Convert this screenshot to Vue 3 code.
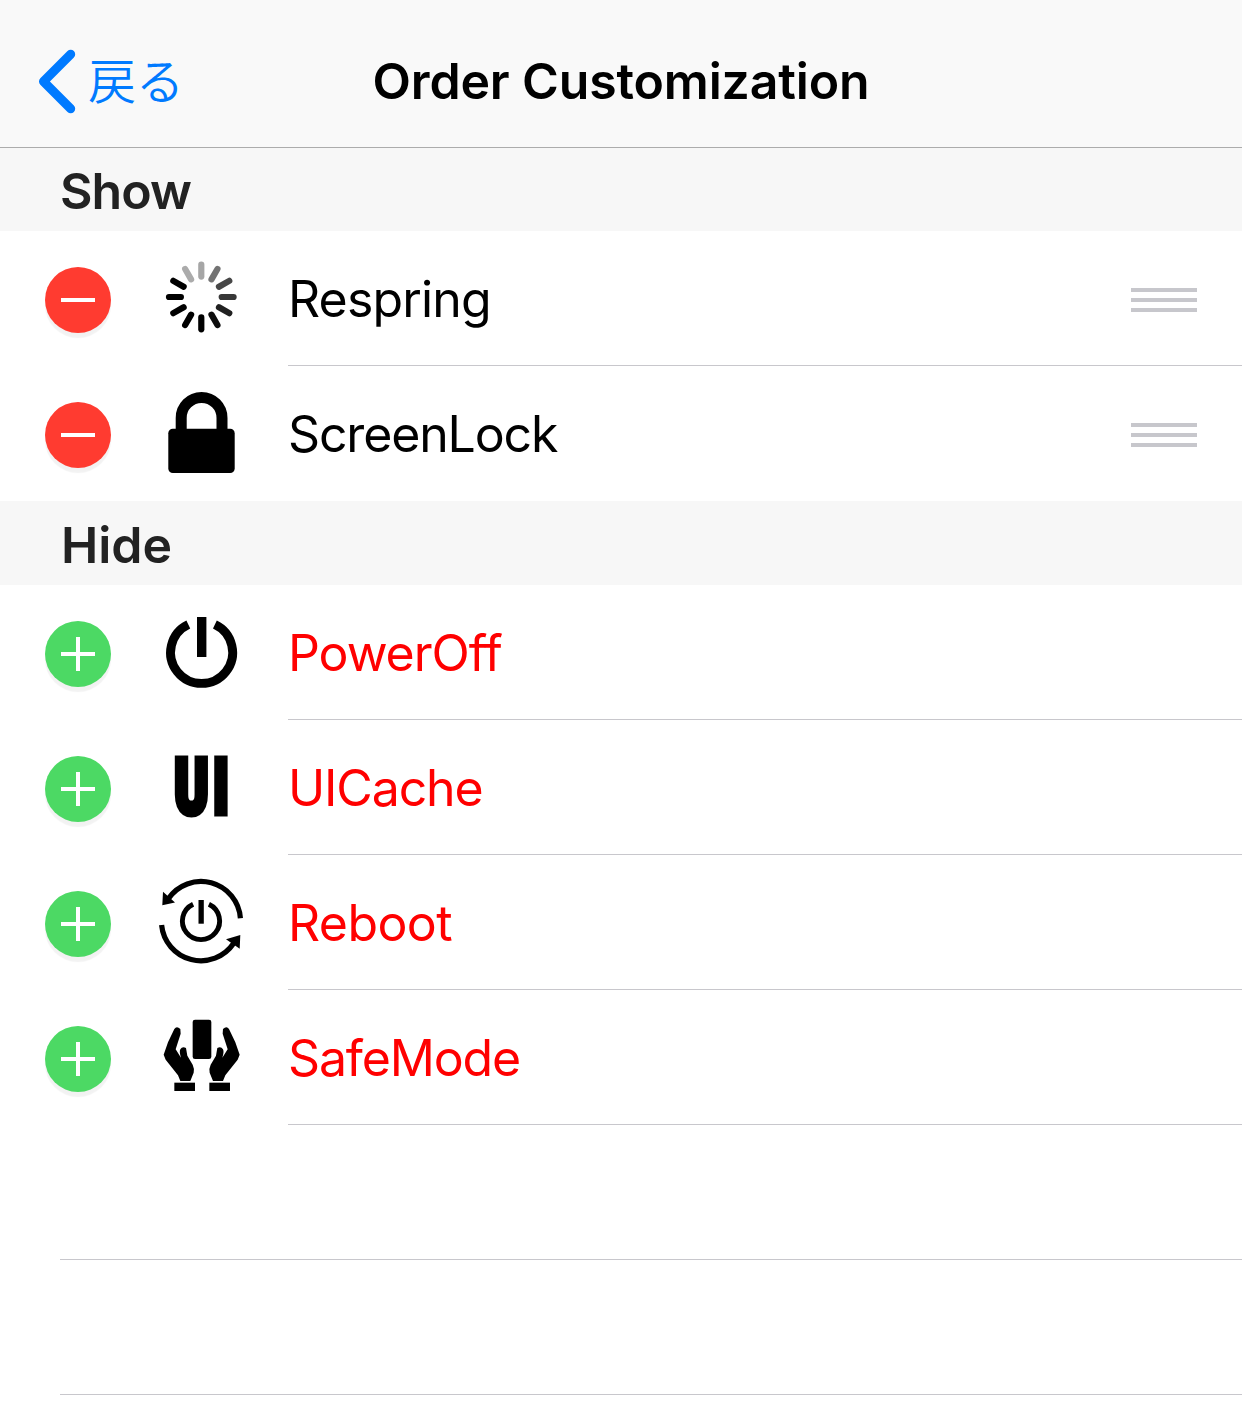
<script setup>
const sections = [
  {
    title: 'Show',
    kind: 'show',
    items: [
      { name: 'Respring', icon: 'spinner' },
      { name: 'ScreenLock', icon: 'lock' },
    ],
  },
  {
    title: 'Hide',
    kind: 'hide',
    items: [
      { name: 'PowerOff', icon: 'power' },
      { name: 'UICache', icon: 'ui' },
      { name: 'Reboot', icon: 'reboot' },
      { name: 'SafeMode', icon: 'hands' },
    ],
  },
]

const spokes = [0.35, 0.55, 0.72, 0.78, 0.87, 0.95, 1, 1, 1, 1, 1, 0.33]

const hand =
  'M73 72Q80 62 91 72L92 86L77 133L93 158Q87 140 91 133Q97 123 108 129L112 152L128 179Q134 192 131 203L121 228H91L84 211L47 164L41 149L54 112z'
</script>

<template>
  <div class="screen">
    <header class="navbar">
      <a class="back">
        <svg class="chevron" width="40" height="66" viewBox="0 0 40 66">
          <path d="M33.7 5.3L6.5 32.5l27.2 27.2" fill="none" stroke="#007aff" stroke-width="9" stroke-linecap="round" stroke-linejoin="round" />
        </svg>
        <span class="back-label">戻る</span>
      </a>
      <h1 class="title">Order Customization</h1>
      <span class="spacer"></span>
    </header>

    <section v-for="section in sections" :key="section.title" :class="['section', section.kind]">
      <h2 class="section-title">{{ section.title }}</h2>
      <div v-for="item in section.items" :key="item.name" class="row">
        <span class="toggle">
          <svg width="66" height="66" viewBox="0 0 66 66">
            <rect x="16" y="31" width="34" height="4" fill="#fff" />
            <rect v-if="section.kind === 'hide'" x="31" y="16" width="4" height="34" fill="#fff" />
          </svg>
        </span>

        <svg class="icon" width="90" height="90" viewBox="0 0 90 90">
          <g v-if="item.icon === 'spinner'" stroke="#000" stroke-width="6.2" stroke-linecap="round">
            <line
              v-for="(alpha, i) in spokes"
              :key="i"
              x1="45.3"
              y1="11.7"
              x2="45.3"
              y2="23.6"
              :stroke-opacity="alpha"
              :transform="`rotate(${i * 30} 45.3 44)`"
            />
          </g>
          <g v-else-if="item.icon === 'lock'">
            <rect x="12.3" y="40.8" width="66.4" height="44.2" rx="4.5" />
            <path d="M25.2 43V29.9a20.4 20.4 0 0 1 40.8 0V43" fill="none" stroke="#000" stroke-width="11" />
          </g>
          <g v-else-if="item.icon === 'power'">
            <path d="M32.3 17.4a31 31 0 1 0 26.6 0" fill="none" stroke="#000" stroke-width="8.9" />
            <rect x="41" y="10" width="9.4" height="40" />
          </g>
          <g v-else-if="item.icon === 'ui'" class="ui-mark">
            <text transform="translate(35.5 71.3) scale(.67 1)" text-anchor="middle">U</text>
            <text transform="translate(64.9 71.3) scale(.67 1)" text-anchor="middle">I</text>
          </g>
          <g v-else-if="item.icon === 'reboot'">
            <path d="M37.1 27.2a18.6 18.6 0 1 0 15.8 0" fill="none" stroke="#000" stroke-width="4.9" />
            <rect x="42.5" y="23" width="5.3" height="23.7" />
            <path d="M12.3 21.8A39.5 39.5 0 0 1 84.4 41.3M5.6 48A39.5 39.5 0 0 0 77.7 66.3" fill="none" stroke="#000" stroke-width="5.2" />
            <path d="M7 14.8L19 25.4L6.3 28.2zM84.3 58L83.7 71.7L70 62.3z" />
          </g>
          <g v-else transform="translate(-6 -7) scale(.3333)">
            <rect x="128" y="44" width="56" height="118" rx="7" />
            <path :d="hand" />
            <path :d="hand" transform="translate(310 0) scale(-1 1)" />
            <rect x="73" y="233" width="62" height="25" />
            <rect x="178" y="233" width="62" height="25" />
          </g>
        </svg>

        <div class="cell">
          <span :class="['name', item.icon]">{{ item.name }}</span>
          <span v-if="section.kind === 'show'" class="handle"><i></i><i></i><i></i></span>
        </div>
      </div>
    </section>

    <div class="empty"></div>
    <div class="empty"></div>
  </div>
</template>

<style>
body {
  background: #fff;
}
</style>

<style scoped>
.screen {
  width: 1242px;
  height: 1420px;
  overflow: hidden;
  background: #fff;
  color: #000;
  font-family: Inter, "Noto Sans CJK JP", sans-serif;
}
.navbar {
  box-sizing: border-box;
  display: grid;
  grid-template-columns: 1fr auto 1fr;
  align-items: center;
  height: 148px;
  padding: 16px 37px 0;
  background: #f9f9f9;
  border-bottom: 1px solid #acacac;
}
.back {
  display: flex;
  align-items: center;
  gap: 11px;
  color: #007aff;
}
.chevron {
  display: block;
}
.back-label {
  padding-bottom: 8px;
  font-family: "Noto Sans CJK JP", sans-serif;
  font-weight: 350;
  font-size: 48px;
  line-height: 58px;
}
.title {
  margin: 0;
  padding-bottom: 2px;
  font-size: 50px;
  font-weight: 600;
  line-height: 60px;
  letter-spacing: -0.15px;
}
.section-title {
  box-sizing: border-box;
  height: 83px;
  margin: 0;
  padding: 2px 0 0 60px;
  background: #f7f7f7;
  color: #222;
  font-size: 50px;
  font-weight: 600;
  line-height: 82px;
  letter-spacing: -0.9px;
}
.hide .section-title {
  height: 84px;
  padding: 3px 0 0 61px;
  letter-spacing: 0;
}
.row {
  display: flex;
  height: 135px;
  padding-left: 45px;
}
.toggle {
  flex: none;
  width: 66px;
  height: 66px;
  margin-top: 36px;
  border-radius: 50%;
  background: #ff3b30;
  box-shadow: 0 5px 1px rgba(0, 0, 0, 0.05);
}
.hide .toggle {
  background: #4cd964;
}
.toggle svg {
  display: block;
}
.icon {
  flex: none;
  margin: 22px 42px 0 45px;
  overflow: visible;
}
.ui-mark text {
  font-family: Roboto, sans-serif;
  font-weight: 900;
  font-size: 76px;
  stroke: #000;
  stroke-width: 7px;
}
.cell {
  box-sizing: border-box;
  flex: 1;
  display: flex;
  align-items: center;
  justify-content: space-between;
  padding: 4px 45px 0 0;
  border-bottom: 1px solid #c8c7cc;
}
.show .row:last-child .cell {
  border-bottom-color: transparent;
}
.name {
  padding-bottom: 2px;
  font-size: 50px;
  line-height: 60px;
}
.name.spinner {
  letter-spacing: -0.85px;
}
.name.lock,
.name.ui,
.name.hands {
  letter-spacing: -1.15px;
}
.name.power {
  letter-spacing: -1.05px;
}
.name.reboot {
  letter-spacing: -0.6px;
}
.hide .name {
  color: #f00;
}
.handle {
  display: flex;
  flex-direction: column;
  gap: 6px;
}
.handle i {
  width: 66px;
  height: 4px;
  background: #c7c7cc;
}
.empty {
  box-sizing: border-box;
  height: 135px;
  margin-left: 60px;
  border-bottom: 1px solid #c8c7cc;
}
</style>
